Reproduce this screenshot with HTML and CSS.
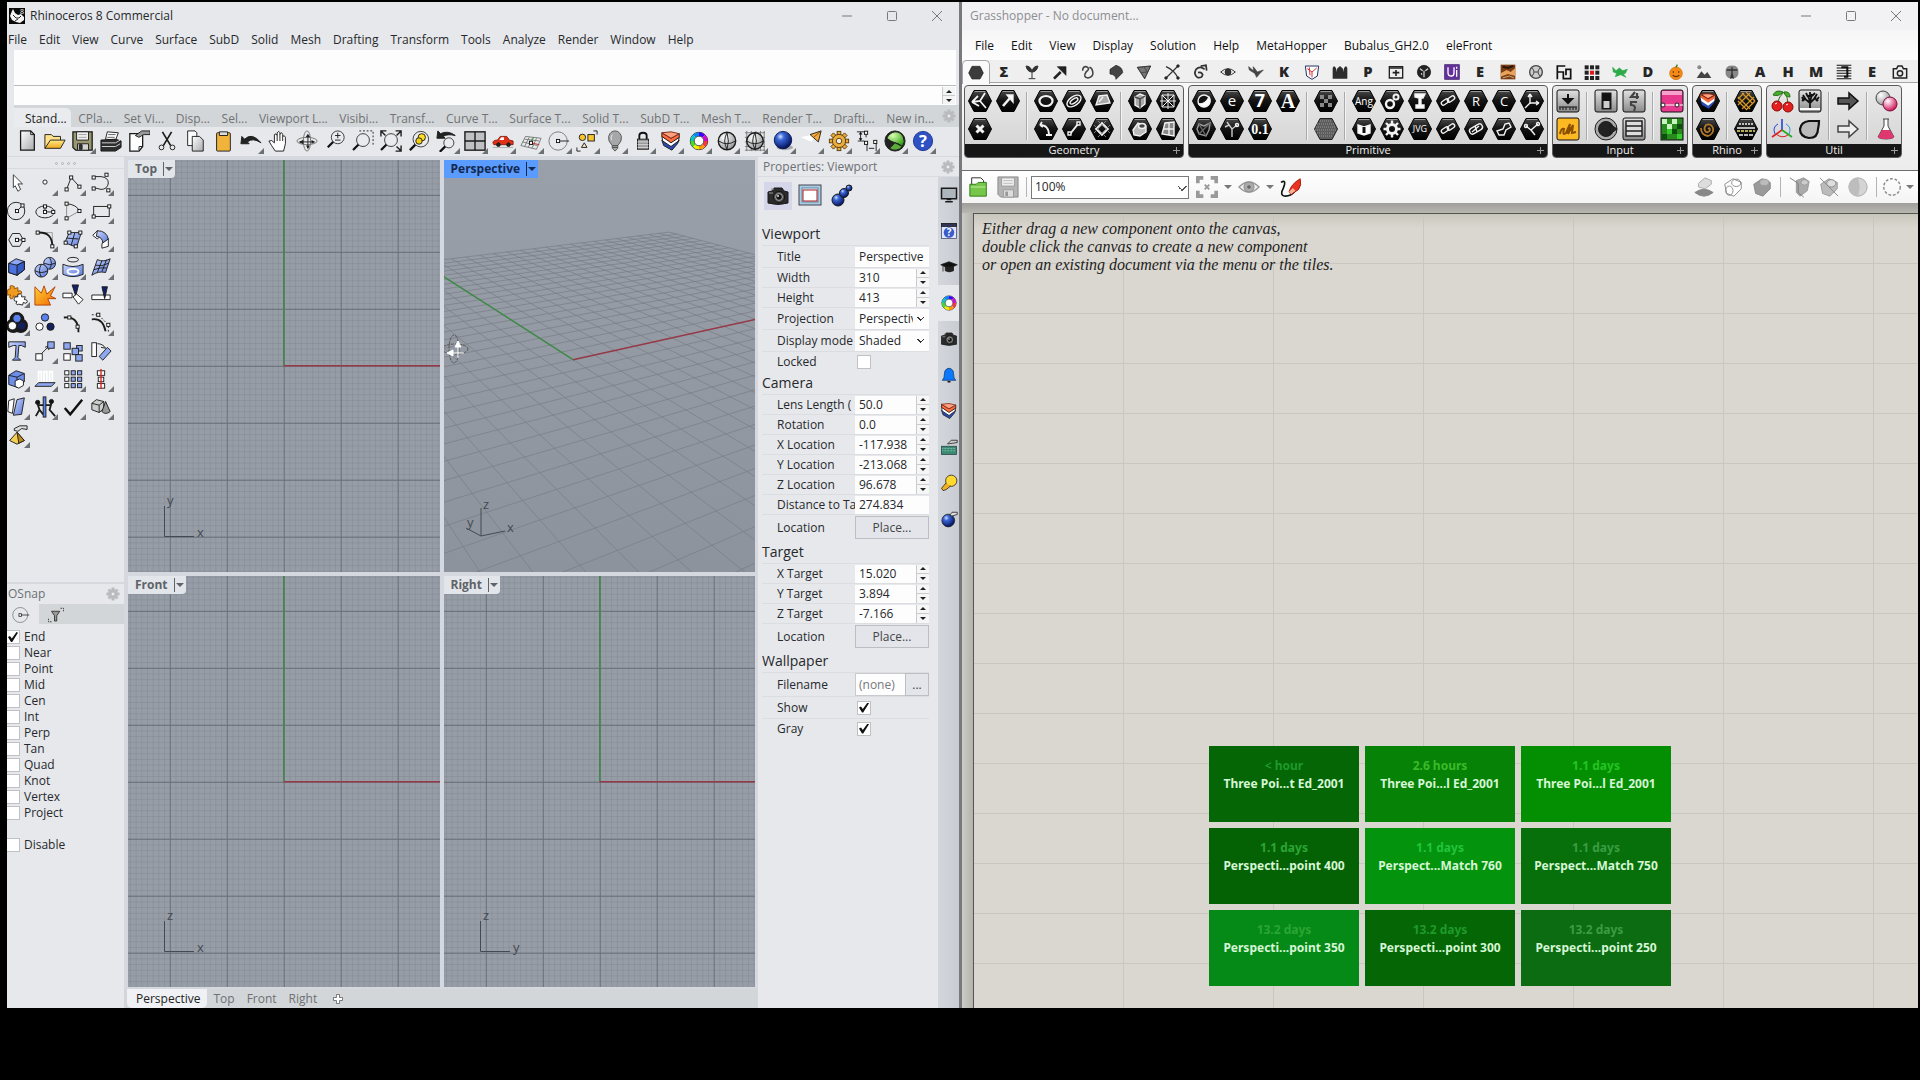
FILE: index.html
```html
<!DOCTYPE html>
<html lang="en">

<head>
    <meta charset="UTF-8">
    <meta name="viewport" content="width=device-width, initial-scale=1.0">
    <title>Rhinoceros 8 Commercial</title>
    <link rel="stylesheet" href="styles.css">
</head>

<body>
    <!-- shared gradients -->
    <svg class="defs" aria-hidden="true">
        <defs>
            <radialGradient id="gBlue" cx=".35" cy=".3" r=".7"><stop offset="0" stop-color="#cfe0ff"/><stop offset=".3" stop-color="#3a67d8"/><stop offset="1" stop-color="#06145e"/></radialGradient>
            <radialGradient id="gWhite" cx=".35" cy=".3" r=".8"><stop offset="0" stop-color="#fff"/><stop offset="1" stop-color="#8d8f94"/></radialGradient>
            <radialGradient id="gGreen" cx=".35" cy=".25" r=".8"><stop offset="0" stop-color="#d8ffb0"/><stop offset="1" stop-color="#2f9a12"/></radialGradient>
            <radialGradient id="gPink" cx=".35" cy=".3" r=".7"><stop offset="0" stop-color="#fff"/><stop offset="1" stop-color="#d2195c"/></radialGradient>
            <linearGradient id="gGray" x2="1" y2="1"><stop offset="0" stop-color="#fff"/><stop offset="1" stop-color="#a9abaf"/></linearGradient>
            <linearGradient id="gBox" x2="0" y2="1"><stop offset="0" stop-color="#e2e2e2"/><stop offset="1" stop-color="#8a8a8a"/></linearGradient>
            <linearGradient id="gHex" x2="0" y2="1"><stop offset="0" stop-color="#4a4a4a"/><stop offset=".45" stop-color="#151515"/><stop offset="1" stop-color="#000"/></linearGradient>
            <linearGradient id="gGold" x2="0" y2="1"><stop offset="0" stop-color="#ffe88a"/><stop offset="1" stop-color="#f0a81c"/></linearGradient>
            <linearGradient id="gFlat" x2="1" y2="1"><stop offset="0" stop-color="#c9d6ff"/><stop offset="1" stop-color="#5878d8"/></linearGradient>
            <linearGradient id="gFire" x2="1" y2="1"><stop offset="0" stop-color="#ffcf3a"/><stop offset="1" stop-color="#f06a00"/></linearGradient>
            <pattern id="minor" width="5.67" height="5.67" patternUnits="userSpaceOnUse"><path d="M0 0H5.67M0 0V5.67" class="minor"/></pattern>
            <pattern id="major" width="56.7" height="56.7" patternUnits="userSpaceOnUse"><path d="M0 0H56.7M0 0V56.7" class="major"/></pattern>
        </defs>
    </svg>

    <div class="desktop">
        <section class="win rhino">
            <header class="title-bar">
                <svg class="logo" viewBox="0 0 16 16"><path d="M0 0H16V16H0z" fill="#0a0a0a"/><path d="M1 8L3 3 4 1 6 5 9 7 12 6 15 9 15 12 11 15 7 14 3 12z" fill="#f4f4f4"/><path d="M4 7L7 10 10 10 12 8M6 13L9 11" stroke="#222" fill="none"/><text x="11" y="6" font-size="7" fill="#fff">8</text></svg>
                <h1>Rhinoceros 8 Commercial</h1>
                <div class="win-btns"></div>
            </header>
            <nav class="menu" data-items="File,Edit,View,Curve,Surface,SubD,Solid,Mesh,Drafting,Transform,Tools,Analyze,Render,Window,Help"></nav>
            <div class="command">
                <div class="history"></div>
                <div class="prompt">
                    <input type="text" aria-label="Command">
                    <span class="spin"><button aria-label="Up"></button><button aria-label="Down"></button></span>
                </div>
            </div>
            <div class="tabs" data-items="Stand...,CPla...,Set Vi...,Disp...,Sel...,Viewport L...,Visibi...,Transf...,Curve T...,Surface T...,Solid T...,SubD T...,Mesh T...,Render T...,Drafti...,New in..."></div>
            <div class="toolbar" id="standard"></div>

            <div class="work">
                <aside class="side">
                    <div class="toolbox">
                        <div class="grip"><i></i><i></i><i></i><i></i></div>
                        <div class="tool-grid" id="tools"></div>
                    </div>
                    <div class="osnap">
                        <h2>OSnap <span class="gear"></span></h2>
                        <div class="osnap-tabs">
                            <button class="active" data-icon="snap" aria-label="Snaps"></button>
                            <button data-icon="filter" aria-label="Filter"></button>
                        </div>
                        <div class="snaps" id="snaps"></div>
                    </div>
                </aside>

                <main class="views">
                    <div class="view-grid">
                        <div class="view" data-name="Top" data-v="y" data-h="x"></div>
                        <div class="view persp" data-name="Perspective"></div>
                        <div class="view" data-name="Front" data-v="z" data-h="x"></div>
                        <div class="view" data-name="Right" data-v="z" data-h="y"></div>
                    </div>
                    <div class="view-tabs">
                        <button class="active">Perspective</button>
                        <button>Top</button>
                        <button>Front</button>
                        <button>Right</button>
                        <button class="add" data-icon="plus" aria-label="New viewport"></button>
                    </div>
                </main>

                <aside class="props">
                    <h2>Properties: Viewport <span class="gear"></span></h2>
                    <div class="props-body">
                        <form class="form">
                            <div class="pages">
                                <button type="button" class="active" data-icon="camera" aria-label="Viewport"></button>
                                <button type="button" data-icon="frame" aria-label="Frame"></button>
                                <button type="button" data-icon="balls" aria-label="Material"></button>
                            </div>
                            <div id="rows"></div>
                        </form>
                        <div class="strip" id="strip"></div>
                    </div>
                </aside>
            </div>
        </section>

        <section class="win gh">
            <header class="title-bar">
                <h1>Grasshopper - No document...</h1>
                <div class="win-btns"></div>
            </header>
            <nav class="menu" data-items="File,Edit,View,Display,Solution,Help,MetaHopper,Bubalus_GH2.0,eleFront"></nav>
            <div class="gh-tabs" id="ghTabs"></div>
            <div class="ribbon" id="ribbon"></div>
            <div class="gh-bar">
                <button data-icon="ghOpen" aria-label="Open"></button>
                <button data-icon="ghSave" aria-label="Save"></button>
                <i class="sep"></i>
                <select aria-label="Zoom"><option>100%</option></select>
                <button data-icon="extents" aria-label="Zoom extents"></button>
                <i class="arrow"></i>
                <button class="eye" data-icon="eyeGray" aria-label="Preview"></button>
                <i class="arrow"></i>
                <button data-icon="sketch" aria-label="Sketch"></button>
                <span class="fill"></span>
                <button data-icon="cylOff" aria-label="No preview"></button>
                <button data-icon="cylWire" aria-label="Wireframe preview"></button>
                <button data-icon="cyl" aria-label="Shaded preview"></button>
                <i class="sep"></i>
                <button data-icon="cylCut" aria-label="Selected preview"></button>
                <button data-icon="cylSlash" aria-label="Disable preview"></button>
                <button data-icon="ballGray" aria-label="Mesh quality"></button>
                <i class="sep"></i>
                <button class="narrow" data-icon="dotted" aria-label="Preview settings"></button>
                <i class="arrow"></i>
            </div>
            <div class="canvas">
                <div class="paper">
                    <p>Either drag a new component onto the canvas,<br>double click the canvas to create a new component<br>or open an existing document via the menu or the tiles.</p>
                </div>
                <div class="tiles">
                    <button class="t1"><small>&lt; hour</small>Three Poi...t Ed_2001</button>
                    <button class="t2"><small>2.6 hours</small>Three Poi...l Ed_2001</button>
                    <button class="t3"><small>1.1 days</small>Three Poi...l Ed_2001</button>
                    <button class="t4"><small>1.1 days</small>Perspecti...point 400</button>
                    <button class="t5"><small>1.1 days</small>Perspect...Match 760</button>
                    <button class="t6"><small>1.1 days</small>Perspect...Match 750</button>
                    <button class="t7"><small>13.2 days</small>Perspecti...point 350</button>
                    <button class="t1"><small>13.2 days</small>Perspecti...point 300</button>
                    <button class="t8"><small>13.2 days</small>Perspecti...point 250</button>
                </div>
            </div>
        </section>
    </div>

    <script src="icons.js"></script>
    <script src="main.js"></script>
</body>

</html>
```
FILE: icons.js
```js
// every icon is drawn on a 24 x 24 box
// control point
const pt = (x, y) => `<rect x="${x - 1.7}" y="${y - 1.7}" width="3.4" height="3.4" fill="#fff" stroke="#111"/>`;
// grasshopper hexagon with something white on it
const hex = s => `<path d="M.5 12L6 1.5H18L23.5 12 18 22.5H6z" fill="url(#gHex)" stroke="#000"/><path d="M6.6 2.5H17.4" stroke="#999"/><g stroke="#f2f2f2" stroke-width="1.4">${s}</g>`;
const hexText = (t, size, cls = '') => hex(`<text class="${cls}" x="12" y="${12 + size * .36}" font-size="${size}" text-anchor="middle" fill="#fff" stroke="none">${t}</text>`);
const box = s => `<rect x="1" y="1" width="22" height="22" rx="2" fill="url(#gBox)" stroke="#111"/>${s}`;
const letter = t => `<text class="fat" x="12" y="20" font-size="22" text-anchor="middle" fill="#262626" stroke="none">${t}</text>`;
const lens = (x, y, r) => `<path d="M${x - r * .7} ${y + r * .7}L${x - r * .7 - 6} ${y + r * .7 + 6}" stroke="#111" stroke-width="2.4"/><circle cx="${x}" cy="${y}" r="${r}" fill="#e9ebee" stroke="#333"/>`;
const cylPath = '<path d="M3 9L12 3 21 7V14L13 22 5 19z"';
const wheel = (() => {
    const c = ['#f33', '#f90', '#ee0', '#4d2', '#0cb', '#08f', '#40f', '#d0d'];
    let s = '<circle cx="12" cy="12" r="9.5" stroke="#222" fill="#fff"/>';
    c.forEach((v, i) => {
        const a = i * Math.PI / 4, b = a + Math.PI / 4;
        s += `<path d="M${12 + 7.3 * Math.cos(a)} ${12 + 7.3 * Math.sin(a)}A7.3 7.3 0 0 1 ${12 + 7.3 * Math.cos(b)} ${12 + 7.3 * Math.sin(b)}" stroke="${v}" stroke-width="4"/>`;
    });
    return s + '<circle cx="12" cy="12" r="5.2" stroke="#444" fill="#fff"/>';
})();
const cog = (fill, stroke) => {
    let s = '';
    for (let i = 0; i < 8; i++) s += `<rect x="10" y="1.5" width="4" height="5" fill="${fill}" stroke="${stroke}" transform="rotate(${i * 45} 12 12)"/>`;
    return s + `<circle cx="12" cy="12" r="7.2" fill="${fill}" stroke="${stroke}"/><circle cx="12" cy="12" r="3" fill="#eee" stroke="${stroke}"/>`;
};
const layers = '<path d="M2 11L12 16 21 11 19 15 13 22 4 17z" fill="#2b4bb4"/><path d="M2 7L12 13 21 8 20 12 12 18 3 12z" fill="#fff"/><path d="M2 3L12 9 21 4V8L12 14 2 7z" fill="#ff6a3c"/><path d="M2 3L12 2 21 4 12 9z" fill="#ffa080" stroke="#7a2410"/>';
const cameraIcon = '<path d="M2 8L6 7 8 4H16L18 7 22 8V19Q12 22 2 19z" fill="#2b2b2b"/><path d="M3 9H7M5 5H8" stroke="#999"/><circle cx="13" cy="13" r="5.5" fill="#555" stroke="#111"/><circle cx="13" cy="13" r="3.4" fill="#151515" stroke="#aaa"/><circle cx="12" cy="12" r="1" fill="#ddd" stroke="none"/>';
const hand = '<path d="M9 5L15 2H23V6L17 5 13 8 9 7z" fill="#ddd"/>';

const icons = {
    // standard toolbar
    newFile: '<path d="M5 1H16L20 5V22H5z" fill="url(#gGray)" stroke-width="1.4"/><path d="M16 1V5H20"/>',
    open: '<path d="M1 20V5H8L10 7H18V12" fill="#ffe28a"/><path d="M1 20L7 11H23L18 20z" fill="url(#gGold)"/>',
    save: '<path d="M1 2H22V22H4L1 19z" fill="#9b9871" stroke-width="1.4"/><path d="M5 2H18V11H5z" fill="#f2f2f2"/><path d="M7 5H16M7 8H16" stroke="#999"/><path d="M6 15H18V22H6z" fill="#d5d5d5"/><path d="M8 16H11V21H8z" fill="#333"/>',
    print: '<path d="M8 2L20 3 17 11 6 10z" fill="#fff"/><path d="M9 5H17M8 8H16" stroke="#555"/><path d="M1 11L17 10 23 12V19L17 23H1z" fill="#2e2e2e"/><path d="M2 14L17 14 22 11M2 18H17L22 15" stroke="#ddd"/>',
    docProps: '<path d="M2 4H16V18L12 23H2z" fill="#fff" stroke-width="1.4"/><path d="M16 18H12V22"/><path d="M8 6L15 1H24V5L17 5 12 8z" fill="#999"/>',
    cut: '<path d="M7 2L16 17M17 2L8 17" stroke-width="1.8"/><circle cx="6" cy="19" r="2.6"/><circle cx="18" cy="19" r="2.6"/>',
    copy: '<path d="M4 1H12L14 3V17H4z" fill="#fff"/><path d="M9 7H17L21 11V23H9z" fill="url(#gGray)"/>',
    paste: '<rect x="5" y="3" width="15" height="20" rx="1" fill="#f0b43c"/><path d="M8 6V2H17V6z" fill="#ddd"/>',
    undo: '<path d="M1 15L2 7 5 10Q13 2 23 14 14 8 8 13L10 15z" fill="#222"/>',
    pan: '<path d="M8 23Q3 16 1 12 4 10 7 14V5Q9 3 10 6V3Q12 0 13 3V5Q15 1 16 5V7Q18 5 19 8V15L17 23z" fill="#fff"/><path d="M10 6V12M13 5V12M16 7V12"/>',
    orbit: '<ellipse cx="12" cy="12" rx="11" ry="4" stroke="#777"/><ellipse cx="12" cy="12" rx="4" ry="11" stroke="#777"/><path d="M4 13H19M13 6V19" stroke="#222"/><path d="M3 13L8 10.5V15.500zM13 4L10.5 8H15.5zM21 13L17 11V15zM13 21L11 17H15z" fill="#222" stroke="none"/>',
    zoom: lens(15, 8, 7) + '<path d="M12 6H18M15 3V9M12 11H18"/>',
    zoomWin: '<path d="M8 1H23V16" stroke-dasharray="2 2"/>' + lens(12, 11, 7),
    zoomExt: '<path d="M1 7V1H7M17 1H23V7M23 17V23H17M1 1L6 6M23 1L18 6M23 23L18 18" stroke-width="1.5"/>' + lens(12, 11, 7),
    zoomSel: lens(14, 10, 8.5) + '<circle cx="15" cy="8" r="4" fill="#ffdf20"/><circle cx="12" cy="12" r="3.5" fill="#f3cf10"/>',
    undoView: '<path d="M1 9L2 1 5 4Q13 0 21 6 12 4 8 7L10 9z" fill="#222"/>' + lens(14, 14, 5.5),
    fourView: '<rect x="1" y="2" width="22" height="20" fill="#bfc1c4" stroke-width="1.5"/><path d="M12 2V22M1 12H23" stroke-width="1.5"/>',
    car: '<path d="M1 14Q1 11 6 11L9 7H16L19 11 23 12V16H2z" fill="#e03018" stroke="#8e1c10"/><path d="M10 8H13V11H8z" fill="#fff" stroke="none"/><circle cx="7" cy="16" r="2" fill="#222"/><circle cx="18" cy="16" r="2" fill="#222"/><path d="M1 19H23" stroke="#aaa"/>',
    cplane: '<path d="M6 7L23 9 18 21 1 17zM5 10L21 12M3 13L19 17M10 8L5 18M14 8L9 19M18 9L13 20" stroke="#777"/><path d="M12 14L21 16" stroke="#c22"/><path d="M12 14L15 8" stroke="#3a3"/>' + pt(12, 14),
    snap: '<circle cx="11" cy="12" r="10" stroke="#777"/><path d="M11 12H23"/>' + pt(11, 12),
    selShapes: '<circle cx="7" cy="8" r="3.5" fill="#f9c52a"/><rect x="13" y="5" width="7" height="7" fill="#f9c52a"/><path d="M9 14L12 19H6z" fill="#fde9c0"/><path d="M19 1H23V5M1 19V23H5"/>',
    bulb: '<path d="M9 17Q4 12 5 7 7 1 12 1 17 1 19 7 20 12 15 17V20L12 23 9 20z" fill="#a5a7a9" stroke="#555"/><path d="M9 17H15M9 19H15" stroke="#444"/><path d="M9 5Q7 8 8 11" stroke="#eee"/>',
    lock: '<path d="M8 11V6Q8 3 12 3 16 3 16 6V11" stroke="#111" stroke-width="2"/><rect x="6" y="10" width="12" height="11" fill="#999"/><path d="M6 13H18M6 16H18M6 19H18" stroke="#ddd"/>',
    layers,
    wheel,
    wire: '<circle cx="12" cy="12" r="9.5" fill="url(#gWhite)" stroke-width="1.5"/><path d="M3 12Q12 18 21 12M12 3Q7 12 12 21M12 3Q15 12 12 21"/>',
    wireGrid: '<path d="M1 3H23M1 8H23M1 13H23M1 18H23M1 22H23M3 1V23M8 1V23M13 1V23M18 1V23M22 1V23" stroke="#777"/><circle cx="12" cy="12" r="9" fill="url(#gWhite)" stroke-width="1.5"/><path d="M3 12Q12 18 21 12M12 3Q7 12 12 21M12 3Q15 12 12 21"/>',
    ball: '<ellipse cx="14" cy="19" rx="9" ry="3" fill="#aaa" stroke="none"/><circle cx="12" cy="11" r="9.5" fill="url(#gBlue)" stroke="#08144e"/>',
    spot: '<path d="M17 4L1 8 13 13z" fill="#fff" stroke="none"/><path d="M11 5L23 1 20 13z" fill="#f6aa3a"/><path d="M23 1L15 8" stroke="#7a4a10"/>',
    cog: cog('#e9ad3c', '#5b3a08'),
    dims: '<path d="M1 2H9M5 3V11M2 12H9M14 20H20M12 13V23M22 13V23M11 3V8"/>' + pt(11, 3) + pt(11, 14) + pt(21, 13) + '<path d="M5 2L3 5H7zM5 12L3 9H7z" fill="#111" stroke="none"/>',
    green: '<circle cx="12" cy="12" r="11" fill="#222"/><path d="M12 2A10 10 0 0 1 20 18Q15 14 12 14 8 13 3 9 6 3 12 2z" fill="url(#gGreen)"/><path d="M12 14L20 18A10 10 0 0 1 6 20z" fill="#5cab3a"/>',
    help: '<circle cx="12" cy="12" r="10.5" fill="#2e52c4" stroke="#1d3790"/><text x="12" y="18.5" class="bold" font-size="18" text-anchor="middle" fill="#fff" stroke="none">?</text>',

    // side tools
    arrow: '<path d="M8 3L18 13H13L16 19 13 21 10 15 8 17z" fill="#fff" stroke="#333"/>',
    point: '<circle cx="12" cy="11" r="2.3" fill="#fff"/>',
    polyline: '<path d="M5 19L10 6 19 16"/>' + pt(5, 19) + pt(10, 6) + pt(19, 16),
    curve: '<path d="M4 5H12Q20 6 20 12 19 19 12 19L4 17"/>' + pt(4, 6) + pt(18, 3) + pt(4, 18) + pt(20, 20),
    circle: '<circle cx="11" cy="12" r="9.5"/><path d="M12 12L18 6"/>' + pt(12, 12) + pt(18, 6),
    ellipse: '<ellipse cx="12" cy="13" rx="10" ry="6.5"/><path d="M12 7V13H21"/>' + pt(12, 7) + pt(12, 13) + pt(21, 13),
    arc: '<path d="M5 4V20L19 12" stroke="#888"/><path d="M5 4Q16 5 19 12"/>' + pt(5, 4) + pt(19, 12) + pt(5, 20),
    rect: '<rect x="4" y="7" width="17" height="11"/>' + pt(4, 18) + pt(21, 7),
    polygon: '<path d="M3 13L7 6H15L19 13 15 20H7z"/><path d="M12 13H19"/>' + pt(12, 13) + pt(19, 13),
    fillet: '<path d="M4 5H20V20" stroke="#999"/><path d="M4 5Q20 4 20 20" stroke-width="2"/>' + pt(4, 5) + pt(20, 20),
    surf4: '<path d="M8 5L21 5 16 21 3 16z" fill="url(#gFlat)"/><path d="M14 5L10 19M5 11L18 12"/>' + pt(8, 5) + pt(20, 5) + pt(4, 16) + pt(15, 20),
    surf3: '<path d="M3 8L8 3 13 7 8 12z" fill="#fff"/><path d="M8 3Q18 3 20 12L14 17Q14 10 7 9z" fill="url(#gFlat)"/><path d="M20 12V20L13 22V17z" fill="#fff"/>',
    cube: '<path d="M3 8L11 3 20 6V15L12 21 3 18z" fill="#8ba7f6"/><path d="M3 8L12 10 20 6V15L12 21 3 18z" fill="#4c73dd"/><path d="M12 10V21L20 15V6z" fill="#345ac6"/>',
    spheres: '<circle cx="17" cy="8" r="6.5" fill="url(#gFlat)"/><circle cx="8" cy="16" r="7" fill="url(#gFlat)"/><path d="M1 16Q8 20 15 16M8 9Q4 16 8 23M11 8Q17 11 23 8M17 2Q21 8 17 14"/>',
    disc: '<ellipse cx="12" cy="4" rx="6" ry="2.5"/><path d="M1 9Q12 14 23 9V20Q12 25 1 20z" fill="url(#gFlat)"/><ellipse cx="12" cy="17" rx="6" ry="3" stroke="#fff" stroke-width="2"/>',
    sheet: '<path d="M8 4Q15 7 22 3L17 18Q9 16 2 21z" fill="url(#gFlat)"/><path d="M6 10Q13 12 20 8M4 15Q11 12 18 13M13 5L8 18M18 4L13 17"/>',
    puzzle: '<path d="M2 6L5 5Q3 1 7 2 10 2 9 5L13 4 13 8Q17 6 17 10 16 13 13 11L12 14 8 13Q8 17 5 16 3 14 5 12L1 12z" fill="#f09a20" stroke="#8b5000"/><path d="M10 14L13 14Q12 10 16 11 18 12 17 14L21 14 20 17Q24 17 23 20 21 22 19 20L18 23 14 22Q12 24 11 21L12 19Q8 19 9 16z" fill="#fff"/>',
    explode: '<path d="M1 23V3L8 10 11 2 14 11 23 3 18 13 24 16 15 16 18 23z" fill="url(#gFire)" stroke="#b04000"/>',
    trim: '<path d="M11 1H18L15 13z" fill="#12226a"/><path d="M1 10H11V15H1zM12 14L16 11 23 17 18 22z" fill="#fff"/>',
    split: '<path d="M2 12H22V17H2z" fill="#fff"/><path d="M13 3H19L16 16z" fill="#12226a"/>',
    group: '<circle cx="12" cy="8" r="5" stroke-width="6"/><circle cx="8" cy="15" r="5" stroke-width="6"/><circle cx="16" cy="15" r="5" stroke-width="6"/><circle cx="12" cy="7" r="4.500" fill="#5a82ee"/><circle cx="7" cy="15" r="4.500" fill="#fff"/><circle cx="17" cy="15" r="4.500" fill="#14205c"/>',
    ungroup: '<circle cx="12" cy="6" r="4" fill="#5a82ee"/><circle cx="6" cy="16" r="4" fill="#fff"/><circle cx="18" cy="16" r="4" fill="#14205c"/>',
    ctrlPts: '<path d="M2 6Q18 4 18 22" stroke-width="2"/>' + pt(8, 6) + pt(17, 16),
    rebuild: '<path d="M2 3H9L20 14V22" stroke-dasharray="2 2"/><path d="M2 8Q14 6 17 21" stroke-width="2"/>' + pt(9, 3) + pt(20, 14),
    text: '<path d="M3 2H21V8L17 6H14L13 19 16 22H7L10 19 11 6H8L3 8z" fill="url(#gFlat)"/>',
    move: '<path d="M8 15L17 6M17 6L12 8M17 6L16 11"/><rect x="2" y="15" width="7" height="7" fill="#fff"/><rect x="15" y="2" width="7" height="7" fill="#8ea8f0"/>',
    copyObj: '<rect x="2" y="3" width="7" height="7" fill="#8ea8f0"/><rect x="2" y="15" width="7" height="7" fill="#fff"/><rect x="16" y="6" width="6" height="6" fill="#8ea8f0"/><rect x="11" y="9" width="7" height="7" fill="#8ea8f0"/><rect x="15" y="16" width="7" height="7" fill="#8ea8f0"/>',
    rotate: '<rect x="2" y="3" width="5" height="15" fill="#fff"/><path d="M10 18L19 8 23 12 14 22z" fill="#8ea8f0"/><path d="M8 4Q14 4 17 9M17 9L12 8"/>',
    boolean: '<path d="M3 8L11 3 20 6V15L12 21 3 18z" fill="#6d8eea"/><path d="M3 8L12 10 20 6M12 10V21"/><path d="M10 14L15 12 19 14V19L14 22 10 20z" fill="#fff"/>',
    extrude: '<path d="M5 16H23L19 20H1z" fill="#8ea8f0"/><path d="M5 15V4H8V15M11 15V4H14V15M17 15V4H20V15" stroke="#fff" stroke-width="2"/>',
    array: [3, 10, 17].map(x => [3, 10, 17].map(y => `<rect x="${x}" y="${y}" width="4.5" height="4.5" fill="${x > 9 ? '#8ea8f0' : '#fff'}"/>`).join('')).join(''),
    align: '<rect x="8" y="3" width="8" height="5" fill="#fff"/><rect x="9" y="10" width="6" height="5" fill="#fff"/><rect x="8" y="17" width="8" height="5" fill="#fff"/><path d="M12 1V23" stroke="#d22" stroke-width="1.5"/>',
    flow: '<path d="M3 5L9 3 7 19 2 17z" fill="#fff"/><path d="M12 4L20 2 17 20 8 21z" fill="url(#gFlat)"/>',
    people: '<circle cx="4" cy="7" r="2.3" fill="#111"/><circle cx="19" cy="6" r="2.3" fill="#111"/><path d="M4 9L6 15 2 22M5 10H19M19 8L17 15 23 22M6 15L10 20" stroke-width="2"/><rect x="10" y="1" width="3" height="22" fill="#5a82ee"/>',
    check: '<path d="M3 13L9 20 22 4" stroke="#111" stroke-width="2.6"/>',
    solids: '<path d="M2 8L7 4 15 6V14L10 18 2 15z" fill="#ccc"/><path d="M2 8L10 10 15 6M10 10V18"/><path d="M17 6L22 17Q17 21 13 17z" fill="#999"/>',
    pyramid: hand + '<path d="M12 9L20 18 12 22 4 18z" fill="#f4cf55"/><path d="M12 9L14 21 20 18z" fill="#c08a18"/>',
    filter: '<path d="M6 7H17L13 13V20H10V13z" fill="#999"/><path d="M18 3H22V7M2 17V21H6" stroke-dasharray="2 1"/>',
    plus: '<path d="M10 6H14V10H18V14H14V18H10V14H6V10H10z" fill="#fff" stroke="#555"/>',

    // properties and panel strip
    camera: cameraIcon,
    frame: '<rect x="1" y="1" width="22" height="20" fill="#a9cce0" stroke="#445"/><rect x="4" y="4" width="16" height="14" fill="#e7f0f6" stroke="#68a"/><rect x="5" y="6" width="14" height="11" fill="#fff" stroke="#a22"/>',
    balls: '<circle cx="8" cy="16" r="6" fill="url(#gBlue)"/><circle cx="14" cy="9" r="4.5" fill="url(#gBlue)"/><circle cx="19" cy="4" r="3" fill="url(#gBlue)"/>',
    monitor: '<rect x="2" y="3" width="20" height="14" fill="#aeb6bd" stroke-width="2"/><path d="M9 18H15M7 21H17" stroke-width="2"/>',
    helpBox: '<rect x="2" y="2" width="20" height="20" fill="#dfe6ff" stroke="#446"/><rect x="2" y="2" width="20" height="4" fill="#335"/><circle cx="12" cy="14" r="7" fill="#3a5cc8" stroke="none"/><text x="12" y="19" class="bold" font-size="13" text-anchor="middle" fill="#fff" stroke="none">?</text>',
    cap: '<path d="M1 9L12 5 23 9 12 14z" fill="#111"/><path d="M7 12V17Q12 20 18 17V11z" fill="#222"/><path d="M4 10V18"/>',
    bell: '<path d="M3 19Q6 17 6 10 6 4 12 3 18 4 18 10 18 17 21 19z" fill="#0a78ff" stroke="#05336e"/><path d="M10 21H14" stroke-width="2"/>',
    keyboard: '<path d="M10 8L15 3H23V6L17 7z" fill="#ccc"/><rect x="2" y="11" width="20" height="11" fill="#3d8a72" stroke="#244"/><path d="M3 14H21M3 17H21" stroke="#9dc" stroke-dasharray="1 1"/>',
    lamp: '<circle cx="15" cy="9" r="7.5" fill="#ffd830"/><path d="M8 12L2 19 4 22 8 21 14 16" fill="#f0b020"/>',
    bomb: '<circle cx="11" cy="14" r="8.5" fill="url(#gBlue)"/><path d="M13 7L16 3H23V6L16 8z" fill="#ddd"/>',

    // grasshopper tabs
    hexTab: '<path d="M1 12L6 2H18L23 12 18 21H6z" fill="#3c3c3c" stroke="#222"/>',
    sigma: letter('Σ'),
    sprout: '<path d="M12 21V12Q5 12 3 3 10 3 12 11 14 3 21 3 19 12 12 12M7 22H17" fill="#333" stroke="#333" stroke-width="1.5"/>',
    dart: '<path d="M3 22L13 12" stroke="#222" stroke-width="4"/><path d="M8 4H21V17z" fill="#222"/>',
    hook: '<path d="M4 10Q4 3 10 4 16 7 9 12 4 20 12 21 21 19 19 11 18 6 14 5" stroke="#444" stroke-width="2.4"/>',
    patch: '<path d="M3 8L12 2Q22 5 22 13L12 23Q12 16 3 15z" fill="#444"/>',
    mesh: '<path d="M2 5L22 3 13 22z" fill="#777"/><path d="M2 5L22 3 13 22zM12 4L17 12 8 13" stroke="#333"/>',
    cross: '<path d="M3 21L21 3M3 4Q15 9 21 21" stroke="#333" stroke-width="1.8"/><circle cx="3" cy="21" r="2" fill="#333"/><circle cx="21" cy="3" r="2" fill="#333"/><circle cx="21" cy="21" r="2" fill="#333"/>',
    spiral: '<path d="M19 8Q12 2 6 8 2 15 8 20 15 22 16 16 14 11 9 13M13 3L21 2 22 10" stroke="#333" stroke-width="2.6"/>',
    eye: '<path d="M1 12Q12 2 23 12 12 22 1 12z" fill="#eee" stroke="#333" stroke-width="1.5"/><circle cx="12" cy="12" r="4.5" fill="#333"/>',
    bird: '<path d="M1 4L8 10 8 4 14 12 23 9 17 15 13 20 10 14 2 9z" fill="#444" stroke="#444"/>',
    K: letter('K'), P: letter('P'), E: letter('E'), D: letter('D'), A: letter('A'), H: letter('H'), M: letter('M'),
    shield: '<path d="M2 3H22L20 18 12 23 4 18z" fill="#fff" stroke="#236" stroke-width="1.5"/><path d="M5 7L12 12 19 6M12 12V20M8 5L9 17" stroke="#c33" stroke-width="1.5"/>',
    mosque: '<path d="M1 22V6L3 3 6 6V12Q7 6 12 3 17 6 18 12V6L21 3 23 6V22z" fill="#2e2e2e" stroke="none"/>',
    plusBox: '<path d="M2 4H22V21H2z" stroke="#222" stroke-width="2"/><path d="M2 6H22M7 13H17M12 9V18" stroke="#222" stroke-width="2.4"/>',
    lady: '<circle cx="12" cy="12" r="10" fill="#222"/><path d="M6 7L10 10M18 7L14 10M12 10V20M8 14L9 16" stroke="#ddd" stroke-width="1.8"/>',
    ui: '<rect x="1" y="1" width="22" height="22" fill="#63309a" stroke="#3b1a66"/><path d="M6 5V13Q6 18 11 18 15 18 15 13V5M19 9V19M19 4V7" stroke="#fff" stroke-width="2"/>',
    photo: '<rect x="1" y="1" width="22" height="22" fill="#7a3c12" stroke="none"/><path d="M1 14L10 9 16 12 23 6V18L12 15 1 19z" fill="#e7a45a" stroke="none"/><path d="M4 4L12 6 20 3" stroke="#2b1408" stroke-width="3"/><path d="M4 21L14 18 21 21" stroke="#fbe1b0"/>',
    reel: '<circle cx="12" cy="12" r="9.500" fill="#ccc" stroke="#444" stroke-width="2"/><path d="M6 6Q12 12 6 18M18 6Q12 12 18 18M9 12H15" stroke="#444" stroke-width="1.5"/>',
    fu: '<path d="M2 23V3H14M2 12H11V22H22V8H15V17" stroke="#111" stroke-width="2.6"/>',
    dots: [1, 9, 17].map(x => [2, 10, 18].map(y => `<rect x="${x}" y="${y}" width="6" height="6" fill="${x === 9 && y === 10 ? '#e01818' : '#222'}" stroke="none"/>`).join('')).join(''),
    gecko: '<path d="M1 5L6 10 11 6 16 10 23 8 20 14 17 15 21 20 13 16 5 19 7 14 2 12z" fill="#2cab48" stroke="#2cab48"/>',
    pumpkin: '<circle cx="12" cy="14" r="9.500" fill="#f58a18" stroke="#d06a00"/><path d="M12 5L14 1" stroke="#3a7a1a" stroke-width="2"/><path d="M8 11V13M16 11V13M7 17Q12 21 17 17" stroke="#5b2a00" stroke-width="1.8"/>',
    hills: '<path d="M1 21L8 11 13 16 17 12 23 21z" fill="#444" stroke="none"/><circle cx="5" cy="5" r="3" fill="#888" stroke="none"/>',
    vitruv: '<rect x="3" y="3" width="18" height="18" rx="7" fill="#888" stroke="#777"/><path d="M12 5V21M4 9H20M10 22L12 14 14 22" stroke="#333" stroke-width="2"/>',
    bars: '<path d="M1 2H23M1 6H23M1 10H23M1 14H23M1 18H23M1 22H23" stroke="#111" stroke-width="1.6"/><path d="M8 5H17V19H12" stroke="#111" stroke-width="3"/>',
    cam: '<path d="M2 7H7L9 3H15L17 7H22V21H2z" stroke="#222" stroke-width="2.2"/><circle cx="12" cy="14" r="4" stroke="#222" stroke-width="2.2"/>',

    // ribbon: geometry
    hPoint: hex('<path d="M4 13L12 12 17 4M12 12L18 19M4 13L10 7M4 13L11 17" stroke-width="1.8"/>'),
    hVec: hex('<path d="M7 17L14 9" stroke-width="2.6"/><path d="M11 6H17V13z" fill="#fff"/>'),
    hX: hex('<path d="M8.5 8.5L15.5 15.5M15.5 8.5L8.5 15.5" stroke-width="3"/>'),
    hRing: hex('<ellipse cx="12" cy="12" rx="6.5" ry="5" stroke-width="2.2"/>'),
    hSpiral: hex('<ellipse cx="12" cy="12" rx="8" ry="4.5" transform="rotate(-35 12 12)"/><ellipse cx="12" cy="12" rx="4.5" ry="2" transform="rotate(-35 12 12)"/>'),
    hPlane: hex('<path d="M6 16L9 7 17 6 20 14z" fill="#aaa"/><path d="M9 13L13 8"/>'),
    hBox: hex('<path d="M7 8L12 5 17 7V15L12 19 7 16z" fill="#aaa"/><path d="M7 8L12 10 17 7M12 10V19" stroke="#444"/>'),
    hGrid: hex('<path d="M6 6H18V18H6zM12 4V20M4 12H20M6 6L18 18M18 6L6 18" stroke-width="1"/>'),
    hArc: hex('<path d="M6 8Q15 8 15 18M6 8L8 5M6 8L9 10M12 18H18" stroke-width="1.8"/>'),
    hLine: hex('<path d="M8 17L16 7" stroke-width="2"/><path d="M6 15H9V18H6zM15 5H18V8H15z" fill="#111"/>'),
    hRect: hex('<path d="M6 12L12 6 18 12 12 18z" stroke-width="1.8"/><path d="M8 4L20 16M4 8L16 20M16 4L4 16M20 8L8 20" stroke="#999" stroke-width=".8"/>'),
    hPipe: hex('<path d="M5 13L10 6 18 9V15L12 19 6 18z" fill="#bbb"/><ellipse cx="14" cy="9" rx="3.5" ry="2.5" fill="#444"/>'),
    hMesh: hex('<path d="M6 17L9 6 18 5V19z" fill="#888"/><path d="M13 5V18M7 12H18" stroke="#eee"/>'),
    // primitive
    hBool: hex('<circle cx="12" cy="12" r="6" fill="#111"/><path d="M17 8A6 6 0 1 1 7 15Q14 15 17 8z" fill="#fff"/>'),
    hE: hexText('e', 15), h7: hexText('7', 18, 'bold'), hA: hexText('A', 20, 'serif'), h01: hexText('0.1', 14, 'serif'),
    hAng: hexText('Ang', 10), hJvg: hexText('JVG', 9), hR: hexText('R', 13), hC: hexText('C', 13),
    hCheck: hex('<path d="M6 6H10V10H6zM14 6H18V10H14zM10 10H14V14H10zM6 14H10V18H6zM14 14H18V18H14z" fill="#888" stroke="none"/>'),
    hDots: '<path d="M.5 12L6 1.5H18L23.5 12 18 22.5H6z" fill="#5c5c5c" stroke="#222"/><path d="M3 7H21M2 10H22M1 13H23M3 16H21M5 19H19M6 4H18" stroke="#999" stroke-dasharray="1 1"/>',
    hGears: hex('<circle cx="10" cy="15" r="4" stroke-width="2.4"/><circle cx="16" cy="8" r="2.5" stroke-width="2"/>'),
    hPiston: hex('<path d="M7 5H17L15 9H13V16H16V19H8V16H11V9L7 8z" fill="#fff"/>'),
    hLink: hex('<rect x="5" y="11" width="8" height="4" rx="2" transform="rotate(-35 9 13)"/><rect x="11" y="8" width="8" height="4" rx="2" transform="rotate(-35 15 10)"/>'),
    hAxes: hex('<path d="M10 14V5M10 14H19M10 14L5 19M10 5L8 8M10 5L12 8M19 14L16 12M19 14L16 16"/>'),
    hBlob: hex('<path d="M7 7L12 9 18 6 17 13 14 19 7 17 5 12z" stroke="#999"/><path d="M7 7L14 19M18 6L7 17" stroke="#666"/>'),
    hTree: hex('<path d="M12 20V12L7 5M12 12L17 8M9 8L5 10" stroke="#ccc"/><circle cx="17" cy="8" r="1.5"/>'),
    hCube: hex('<path d="M6 8L12 10 18 8V16L12 18 6 16z" fill="#fff"/><path d="M12 10V16" stroke="#111" stroke-width="3"/>'),
    hCog: hex('<circle cx="12" cy="12" r="4.5" stroke-width="3"/><path d="M12 3.500V7M12 17V20.500M3.500 12H7M17 12H20.500M6 6L8.500 8.500M15.500 15.500L18 18M18 6L15.500 8.500M8.500 15.500L6 18" stroke-width="2.4"/>'),
    hLinks: hex('<rect x="5" y="9" width="14" height="6" rx="3" transform="rotate(-30 12 12)"/><path d="M8 15L15 9M11 9L13 15"/>'),
    hBone: hex('<path d="M7 18L5 14 11 12 13 7 17 6 19 10 14 13 12 18z"/>'),
    hNet: hex('<path d="M6 9L11 13 18 7M11 13L15 18"/><circle cx="6" cy="9" r="1.5"/><circle cx="18" cy="7" r="1.5"/>'),
    // input
    slider: box('<path d="M12 5V13M8 10L12 14 16 10z" fill="#111" stroke="#111" stroke-width="2"/><path d="M3 18H21M4 18V21M7 18V21M10 18V21M14 18V21M17 18V21M20 18V21" stroke="#111"/>'),
    toggle: box('<rect x="8" y="4" width="9" height="16" fill="#111"/><rect x="9.5" y="12" width="6" height="7" fill="#ccc" stroke="none"/>'),
    digits: box('<path d="M13 3L9 8H17M15 4V10M15 13H9V16Q15 16 12 22" stroke="#444" stroke-width="2.2"/>'),
    pinkGraph: '<rect x="1" y="1" width="22" height="22" rx="2" fill="#e8388e" stroke="#111"/><path d="M2 4H22" stroke="#f8a0cc" stroke-width="4"/><path d="M1 16H23" stroke="#fff"/><circle cx="3" cy="16" r="2" fill="#fff"/><circle cx="17" cy="16" r="2" fill="#fff"/>',
    scribble: '<rect x="1" y="1" width="22" height="22" rx="2" fill="#fdb924" stroke="#111"/><path d="M4 17Q5 11 8 12 6 19 10 16L14 7 12 17 17 8 16 16 20 15" stroke="#8a4f00" stroke-width="2"/>',
    knob: '<circle cx="12" cy="12" r="11" fill="#aaa"/><circle cx="12" cy="12" r="7.5" fill="#222"/><path d="M16 7L23 12 16 17z" fill="#222"/>',
    list: box('<path d="M4 4H20V9H4zM4 9H20V14H4zM4 14H20V19H4z" fill="#ddd" stroke="#222" stroke-width="1.5"/>'),
    swatch: '<rect x="1" y="1" width="22" height="22" fill="#2a8a20" stroke="#111"/><path d="M2 2H7V7H2zM12 2H17V7H12zM7 7H12V12H7z" fill="#c8f4c0" stroke="none"/><path d="M12 12H17V17H12zM17 7H22V12H17zM2 17H7V22H2z" fill="#0c5010" stroke="none"/><path d="M7 12H12V17H7zM17 17H22V22H17z" fill="#36cc2a" stroke="none"/>',
    // rhino
    hLayers: hex(`<g transform="translate(3 3) scale(.76)" stroke="none">${layers}</g>`),
    hWeave: hex('<path d="M4 8L16 20M8 4L19 15M12 3L21 12M4 12L12 20M4 16L16 4M8 20L20 8M12 21L21 12M4 10L10 4" stroke="#d79a2a" stroke-width="1.2"/>'),
    hSwirl: hex('<path d="M12 12Q14 10 14 13 13 16 10 15 7 12 10 8 15 6 17 11 18 17 12 19 5 18 5 11" stroke="#b07828" stroke-width="1.8"/>'),
    hTypes: hex('<path d="M5 7H19" stroke-dasharray="2 1"/><path d="M3 11H21"/><path d="M3 14H21" stroke="#e8e06a" stroke-dasharray="3 1"/><path d="M5 18H19" stroke-dasharray="4 1"/>'),
    // util
    cherry: '<path d="M7 15Q9 7 14 3M18 15Q18 8 14 3" stroke="#3a6a1a"/><path d="M13 3Q6 0 3 6 9 8 13 3zM14 3Q20 2 20 8 15 8 14 3z" fill="#46b02c" stroke="#2a701a"/><circle cx="7" cy="17" r="5" fill="#e22020" stroke="#8a0808"/><circle cx="18" cy="18" r="5" fill="#e22020" stroke="#8a0808"/><path d="M5 15L7 14M16 16L18 15" stroke="#fff"/>',
    tree: box('<path d="M12 20V12M12 14L6 9M12 14L18 8M12 13L10 6M12 13L14 5M7 9L4 12M17 9L20 12M10 8L8 4M8 11L5 6M16 10L19 5M6 12L4 8M18 12L21 8M12 8L12 3M14 7L17 4" stroke="#111" stroke-width="1.8"/><path d="M2 20H22" stroke="#fff" stroke-width="2"/>'),
    fatArrow: '<path d="M2 9H13V4L22 12 13 20V15H2z" fill="#555" stroke="#111" stroke-width="1.5"/>',
    thinArrow: '<path d="M2 9H13V4L22 12 13 20V15H2z" fill="#eee" stroke="#444" stroke-width="1.5"/>',
    blobs: '<circle cx="9" cy="9" r="7" fill="url(#gWhite)" stroke="#444"/><circle cx="16" cy="15" r="7" fill="url(#gPink)" stroke="#7a1038"/>',
    gizmo: '<path d="M12 13V2" stroke="#2244d8" stroke-width="1.6"/><path d="M12 13L2 20" stroke="#d22" stroke-width="1.6"/><path d="M12 13L22 20" stroke="#2a2" stroke-width="1.6"/><path d="M5 17Q2 10 8 7" stroke="#2244d8"/><path d="M19 17Q22 10 16 7" stroke="#2a9ad8"/><path d="M6 17Q12 22 18 18" stroke="#d22"/>',
    guitar: '<path d="M21 4Q21 8 20 12 20 21 11 21 2 20 2 12 3 5 11 4z" fill="#bbb" stroke="#111" stroke-width="2.2"/>',
    flask: '<path d="M9 2H15M10 2V9L4 20Q5 22 12 22 19 22 20 20L14 9V2" fill="#fff" stroke="#444"/><path d="M8 13H16L20 20Q19 22 12 22 5 22 4 20z" fill="#e0386e" stroke="none"/>',

    // canvas toolbar
    ghOpen: '<path d="M4 10V2H14L17 5V10" fill="#fff" stroke="#222"/><path d="M2 9H9L11 7H20V22H2z" fill="#76c64a" stroke="#2a7a14"/><path d="M3 12H19" stroke="#c8f0a8"/>',
    ghSave: '<path d="M1 1H23V23H4L1 20z" fill="#b4b4b4" stroke="#888"/><path d="M5 2H19V11H5z" fill="#eee" stroke="#999"/><path d="M7 5H17M7 8H17" stroke="#bbb"/><path d="M7 15H18V23H7z" fill="#ddd" stroke="#999"/><path d="M9 17H12V22H9z" fill="#999" stroke="none"/>',
    extents: '<path d="M2 8V2H8M16 2H22V8M22 16V22H16M8 22H2V16" stroke="#999" stroke-width="4"/><path d="M9.500 9.500L14.500 14.500M14.500 9.500L9.500 14.500" stroke="#999" stroke-width="2"/>',
    eyeGray: '<path d="M1 12Q12 1 23 12 12 23 1 12z" fill="#eee" stroke="#999" stroke-width="1.5"/><circle cx="12" cy="12" r="5.5" fill="#aaa" stroke="#888"/><circle cx="12" cy="12" r="2" fill="#666" stroke="none"/>',
    sketch: '<path d="M1 7Q6 4 5 9 4 13 2 17 1 22 6 22 12 22 16 17" stroke="#111" stroke-width="1.8"/><path d="M10 17Q12 9 22 3 24 10 20 15L12 20z" fill="#e83420" stroke="#a01208"/><path d="M10 17L14 13 17 16 12 20z" fill="#ffb090" stroke="none"/>',
    cylOff: '<path d="M6 8L13 2 20 5V9L13 14 6 12z" fill="#ddd" stroke="#aaa"/><path d="M2 18Q12 11 22 18 12 26 2 18z" fill="#888" stroke="#888"/>',
    cylWire: cylPath + ' fill="#fff" stroke="#888"/><ellipse cx="15.5" cy="7.5" rx="5" ry="4" stroke="#888"/><ellipse cx="8" cy="16" rx="4" ry="5" stroke="#888"/>',
    cyl: cylPath + ' fill="#999" stroke="#888"/><ellipse cx="14.5" cy="7" rx="5" ry="3.5" fill="#bbb" stroke="#999"/>',
    cylCut: '<path d="M8 5L16 2 22 6 20 16 12 22 8 18z" fill="#aaa" stroke="#999"/><ellipse cx="17" cy="7" rx="4" ry="3" fill="#ccc" stroke="#999"/><path d="M1 2L10 8V18L16 23" stroke="#777"/>',
    cylSlash: cylPath + ' fill="#bbb" stroke="#999"/><ellipse cx="14.5" cy="8" rx="5" ry="4" fill="#ddd" stroke="#888"/><path d="M2 2L22 22" stroke="#888"/>',
    ballGray: '<circle cx="12" cy="12" r="10" fill="#d4d4d4" stroke="#aaa"/><path d="M12 2A10 10 0 0 0 12 22L14 12z" fill="#bdbdbd" stroke="none"/>',
    dotted: '<circle cx="12" cy="12" r="9" stroke="#888" stroke-width="1.5" stroke-dasharray="3 2"/>'
};

function icon(name) {
    return `<svg class="icon" viewBox="0 0 24 24" aria-hidden="true">${icons[name]}</svg>`;
}
```
FILE: main.js
```js
{
    const $ = s => document.querySelector(s);
    const all = s => document.querySelectorAll(s);

    // icon buttons, a star marks a fly-out
    const tools = str => str.trim().split(/\s+/).map(v => {
        const fly = v.endsWith('*');
        const name = v.replace('*', '');
        if (name === '_') return '<span class="cell"></span>';
        return `<button class="cell${fly ? ' fly' : ''}" aria-label="${name}">${icon(name)}</button>`;
    }).join('');

    $('#standard').innerHTML = tools(`newFile open save* print docProps cut copy paste undo* pan orbit zoom zoomWin zoomExt
        zoomSel undoView* fourView* car* cplane* snap* selShapes* bulb* lock* layers* wheel* wire* wireGrid* ball* spot* cog* dims* green* help*`);
    $('#tools').innerHTML = tools(`arrow point* polyline* curve* circle* ellipse* arc* rect* polygon* fillet* surf4* surf3*
        cube* spheres* disc* sheet* puzzle* explode trim split group* ungroup ctrlPts rebuild* text move* copyObj rotate
        boolean* extrude* array* align* flow* people* check* solids* pyramid*`);
    $('#strip').innerHTML = tools('monitor helpBox cap wheel camera bell layers keyboard lamp bomb');
    $('#strip').children[3].classList.add('active');
    $('#ghTabs').innerHTML = tools(`hexTab sigma sprout dart hook patch mesh cross spiral eye bird K shield mosque P plusBox lady
        ui E photo reel fu dots gecko D pumpkin hills vitruv A H M bars E cam`);
    $('#ghTabs').children[0].classList.add('active');

    // ribbon panels: [icons, columns] for each group
    const panels = [
        ['Geometry', ['hPoint hVec hX _', 2], ['hRing hSpiral hPlane hArc hLine hRect', 3], ['hBox hGrid hPipe hMesh', 2]],
        ['Primitive', ['hBool hE h7 hA hBlob hTree h01 _', 4], ['hCheck hDots', 1],
            ['hAng hGears hPiston hLink hR hC hAxes hCube hCog hJvg hLink hLinks hBone hNet', 7]],
        ['Input', ['slider scribble', 1], ['toggle digits knob list', 2], ['pinkGraph swatch', 1]],
        ['Rhino', ['hLayers hSwirl', 1], ['hWeave hTypes', 1]],
        ['Util', ['cherry tree gizmo guitar', 2], ['fatArrow thinArrow', 1], ['blobs flask', 1]]
    ];
    $('#ribbon').innerHTML = panels.map(([name, ...groups]) => `
        <div class="panel">
            <div class="groups">${groups.map(([g, n]) => `<div class="group" style="--cols: ${n}">${tools(g)}</div>`).join('<i></i>')}</div>
            <h3>${name}<b></b></h3>
        </div>`).join('');

    all('[data-icon]').forEach(el => el.innerHTML = icon(el.dataset.icon));
    all('.menu').forEach(el => {
        el.innerHTML = el.dataset.items.split(',').map(v => `<a href="#">${v}</a>`).join('');
    });
    $('.tabs').innerHTML = $('.tabs').dataset.items.split(',').map((v, i) => `<button${i ? '' : ' class="active"'}>${v}</button>`).join('') + '<span class="gear"></span>';
    all('.gear').forEach(el => el.innerHTML = `<svg viewBox="0 0 24 24">${cog('#b9bbbe', '#b9bbbe')}</svg>`);
    all('.win-btns').forEach(el => {
        el.innerHTML = '<button aria-label="Minimize"><svg viewBox="0 0 12 12"><path d="M1 6H11"/></svg></button>'
            + '<button aria-label="Maximize"><svg viewBox="0 0 12 12"><rect x="1.5" y="1.5" width="9" height="9" rx="1"/></svg></button>'
            + '<button aria-label="Close"><svg viewBox="0 0 12 12"><path d="M1 1L11 11M11 1L1 11"/></svg></button>';
    });

    $('#snaps').innerHTML = 'End,Near,Point,Mid,Cen,Int,Perp,Tan,Quad,Knot,Vertex,Project,Disable'.split(',')
        .map(v => `<label${v === 'Disable' ? ' class="last"' : ''}><input type="checkbox"${v === 'End' ? ' checked' : ''}>${v}</label>`).join('');

    // properties form
    const rows = [
        ['head', 'Viewport'], ['tall', 'Title', 'Perspective'], ['num', 'Width', '310'], ['num', 'Height', '413'],
        ['select', 'Projection', 'Perspective'], ['select', 'Display mode', 'Shaded'], ['check', 'Locked', false],
        ['head', 'Camera'], ['num', 'Lens Length (', '50.0'], ['num', 'Rotation', '0.0'], ['num', 'X Location', '-117.938'],
        ['num', 'Y Location', '-213.068'], ['num', 'Z Location', '96.678'], ['text', 'Distance to Ta', '274.834'], ['place', 'Location'],
        ['head', 'Target'], ['num', 'X Target', '15.020'], ['num', 'Y Target', '3.894'], ['num', 'Z Target', '-7.166'], ['place', 'Location'],
        ['head', 'Wallpaper'], ['file', 'Filename', '(none)'], ['check show', 'Show', true], ['check', 'Gray', true]
    ];
    $('#rows').innerHTML = rows.map(([type, label, value], i) => {
        const id = 'f' + i;
        if (type === 'head') return `<h3>${label}</h3>`;
        const spin = '<span class="spin"><button type="button" aria-label="Up"></button><button type="button" aria-label="Down"></button></span>';
        const input = `<input type="text" id="${id}" value="${value}">`;
        let field = input;
        if (type === 'num') field = input + spin;
        if (type === 'select') field = `<select id="${id}"><option>${value}</option></select>`;
        if (type.startsWith('check')) field = `<input type="checkbox" id="${id}"${value ? ' checked' : ''}>`;
        if (type === 'place') field = `<button type="button" id="${id}">Place...</button>`;
        if (type === 'file') field = input + '<button type="button" class="browse">...</button>';
        return `<div class="row ${type}"><label for="${id}">${label}</label><div class="field">${field}</div></div>`;
    }).join('');

    // perspective grid, seen through the camera of the viewport
    const cam = [-117.938, -213.068, 96.678];
    const target = [15.02, 3.894, -7.166];
    const focal = 646;
    const dot = (a, b) => a[0] * b[0] + a[1] * b[1] + a[2] * b[2];
    const unit = a => a.map(v => v / Math.hypot(...a));
    const f = unit(target.map((v, i) => v - cam[i]));
    const r = unit([f[1], -f[0], 0]);
    const u = [r[1] * f[2], -r[0] * f[2], r[0] * f[1] - r[1] * f[0]];
    const toCam = (x, y) => {
        const p = [x - cam[0], y - cam[1], -cam[2]];
        return [dot(p, r), dot(p, u), dot(p, f)];
    };
    const seg = (x1, y1, x2, y2) => {
        let a = toCam(x1, y1), b = toCam(x2, y2);
        const near = 20;
        if (a[2] < near && b[2] < near) return '';
        if (a[2] > b[2]) [a, b] = [b, a];
        if (a[2] < near) {
            const t = (near - a[2]) / (b[2] - a[2]);
            a = a.map((v, i) => v + (b[i] - v) * t);
        }
        const s = p => `${(p[0] / p[2] * focal).toFixed(1)} ${(-p[1] / p[2] * focal).toFixed(1)}`;
        return `M${s(a)}L${s(b)}`;
    };
    let lines = '';
    for (let i = -200; i <= 200; i += 10) {
        lines += seg(i, -200, i, 200) + seg(-200, i, 200, i);
    }

    all('.view').forEach(el => {
        const { name, v, h } = el.dataset;
        const persp = name === 'Perspective';
        const draw = persp
            ? `<path class="floor" d="${lines}"/><path class="green" d="${seg(0, 0, 0, 200)}"/><path class="red" d="${seg(0, 0, 200, 0)}"/>`
            : '<rect x="-600" y="-600" width="1200" height="1200" fill="url(#minor)"/><rect x="-600" y="-600" width="1200" height="1200" fill="url(#major)"/><path class="green" d="M0 0V-600"/><path class="red" d="M0 0H600"/>';
        const axes = persp
            ? '<path d="M37 64V36M37 64L61 59M37 64L22 56"/><text x="39" y="37">z</text><text x="63" y="60">x</text><text x="23" y="55">y</text>'
            : `<path d="M36.5 34V64.5H66"/><text x="39" y="33">${v}</text><text x="69" y="65">${h}</text>`;
        el.innerHTML = `
            <svg class="scene" viewBox="-155 -206 310 412" preserveAspectRatio="xMidYMid slice">${draw}</svg>
            <svg class="axes" viewBox="0 0 100 100">${axes}</svg>
            <button class="tag">${name}<i></i></button>`;
        if (persp) el.innerHTML += '<svg class="cursor" viewBox="0 0 30 32"><ellipse cx="15" cy="16" rx="13" ry="5"/><ellipse cx="14" cy="16" rx="5" ry="14"/><path class="hand" d="M9 20H24M18 12V25"/><path class="hand" d="M7 20L13 17V23zM18 8L15 14H21z"/></svg>';
    });
}
```
FILE: styles.css
```css
* {
    margin: 0;
    padding: 0;
    box-sizing: border-box;
}

body {
    background: #000;
    color: #26282b;
    font: 12px/16px "Open Sans", "Noto Sans", sans-serif;
}

button,
input,
select {
    font: inherit;
    color: inherit;
    background: none;
    border: 0;
    border-radius: 0;
    outline: 0;
    appearance: none;
    min-width: 0;
}

a {
    color: inherit;
    text-decoration: none;
}

svg {
    display: block;
}

.defs {
    position: absolute;
    width: 0;
    height: 0;
}

.defs .minor {
    stroke: #7c848e;
    stroke-width: .8;
}

.defs .major {
    stroke: #676e78;
    stroke-width: 1.8;
}

.icon {
    width: 24px;
    height: 24px;
    fill: none;
    stroke: #1a1a1a;
}

.icon text {
    font-family: "Open Sans", sans-serif;
}

.icon .bold {
    font-weight: 700;
}

.icon .serif {
    font-family: "Liberation Serif", serif;
    font-weight: 700;
}

.icon .fat {
    font-weight: 800;
}

.cell {
    position: relative;
    display: flex;
    align-items: center;
    justify-content: center;
    width: 28px;
    height: 28px;
    flex: none;
}

.fly::after {
    content: "";
    position: absolute;
    right: 1px;
    bottom: 1px;
    border: 3px solid;
    border-color: transparent #6d7073 #6d7073 transparent;
}

.desktop {
    display: grid;
    grid-template-columns: 954fr 957fr;
    height: 100vh;
    min-height: 900px;
    padding: 2px 2px 72px 7px;
}

.win {
    display: flex;
    flex-direction: column;
    min-width: 0;
    overflow: hidden;
}

/* title and menu */
.title-bar {
    display: flex;
    align-items: center;
    height: 28px;
    padding-left: 2px;
    flex: none;
}

.title-bar h1 {
    flex: 1;
    font-size: 12px;
    font-weight: 400;
}

.logo {
    width: 16px;
    height: 16px;
    margin-right: 5px;
}

.win-btns {
    display: flex;
}

.win-btns button {
    width: 45px;
    height: 28px;
    display: flex;
    align-items: center;
    justify-content: center;
}

.win-btns svg {
    width: 12px;
    height: 12px;
    fill: none;
    stroke: #77797c;
}

.menu {
    display: flex;
    align-items: center;
    flex: none;
}

/* rhino window */
.rhino {
    background: #e6e8eb;
    border-right: 2px solid #77797d;
}

.rhino .menu {
    height: 20px;
    padding-left: 1px;
    padding-bottom: 1px;
    gap: 12px;
}

.command {
    margin-left: 7px;
    margin-right: 3px;
    background: #fdfdfd;
    flex: none;
}

.history {
    height: 36px;
    border-bottom: 1px solid #b9bbbd;
}

.prompt {
    display: flex;
    align-items: center;
    height: 19px;
    padding-right: 1px;
}

.prompt input {
    flex: 1;
    padding: 0 4px;
}

.spin {
    display: flex;
    flex-direction: column;
    width: 13px;
    height: 17px;
    border-left: 1px solid #c9cbce;
    background: #f4f4f5;
}

.spin button {
    flex: 1;
    display: flex;
    align-items: center;
    justify-content: center;
}

.spin button + button {
    border-top: 1px solid #c9cbce;
}

.spin button::after {
    content: "";
    border: 3px solid transparent;
    border-top-width: 0;
    border-bottom-color: #222;
}

.spin button + button::after {
    border-width: 3px 3px 0;
    border-top-color: #222;
}

.tabs {
    display: flex;
    align-items: flex-end;
    justify-content: space-between;
    height: 22px;
    margin-left: 7px;
    padding-right: 3px;
    background: #d3d6d8;
    color: #707376;
    flex: none;
}

.tabs button {
    height: 19px;
    padding: 2px 4px 0;
    white-space: nowrap;
}

.tabs .active {
    padding: 2px 4px 0 11px;
    background: #e9ebee;
    border-radius: 0 5px 0 0;
    color: #222;
}

.gear {
    display: inline-block;
    width: 14px;
    height: 14px;
    flex: none;
}

.tabs .gear {
    align-self: center;
}

.toolbar {
    display: flex;
    height: 29px;
    padding-left: 6px;
    flex: none;
}

.toolbar .icon,
.tool-grid .icon {
    width: 22px;
    height: 22px;
}

.work {
    display: flex;
    flex: 1;
    min-height: 0;
    border-top: 1px solid #d5d8dc;
}

.side {
    display: flex;
    flex-direction: column;
    width: 117px;
    flex: none;
}

.toolbox {
    min-height: 427px;
    border-bottom: 2px solid #d5d8dc;
    overflow: hidden;
}

.grip {
    display: flex;
    justify-content: center;
    gap: 3px;
    height: 12px;
    padding-top: 5px;
    border-bottom: 1px solid #d8dade;
}

.grip i {
    width: 3px;
    height: 3px;
    border: 1px solid #b0b2b6;
    border-radius: 50%;
}

.tool-grid {
    display: grid;
    grid-template-columns: repeat(4, 28px);
    margin-left: -4px;
}

.osnap h2 {
    display: flex;
    align-items: center;
    justify-content: space-between;
    height: 20px;
    padding: 0 4px 0 1px;
    font-size: 12px;
    font-weight: 400;
    color: #6d7074;
}

.osnap-tabs {
    display: flex;
    background: #d3d6d8;
}

.osnap-tabs button {
    display: flex;
    justify-content: center;
    width: 34px;
    height: 20px;
    padding-top: 2px;
}

.osnap-tabs .active {
    width: 32px;
    padding-right: 4px;
    background: #e6e8eb;
}

.osnap-tabs .icon {
    width: 18px;
    height: 18px;
}

.snaps {
    padding-top: 5px;
}

.snaps label {
    display: flex;
    align-items: center;
    height: 16px;
}

.snaps .last {
    margin-top: 16px;
}

input[type=checkbox] {
    width: 14px;
    height: 14px;
    border: 1px solid #bfc1c4;
    background: #fff;
    flex: none;
}

input[type=checkbox]:checked::after {
    content: "";
    display: block;
    width: 10px;
    height: 10px;
    margin: 1px;
    background: #111;
    clip-path: polygon(0 50%, 20% 40%, 38% 65%, 85% 0, 100% 8%, 42% 100%, 30% 100%);
}

.snaps input {
    width: 13px;
    margin-right: 4px;
    border-left: 0;
}

.views {
    display: flex;
    flex-direction: column;
    flex: 1;
    min-width: 0;
    background: #d5d9df;
}

.view-grid {
    display: grid;
    grid-template-columns: 1fr 1fr;
    grid-template-rows: 1fr 1fr;
    gap: 4px;
    flex: 1;
    min-height: 0;
    padding: 3px 3px 2px 4px;
}

.view {
    position: relative;
    overflow: hidden;
    min-height: 0;
    background: #979da6;
}

.view.persp {
    background: linear-gradient(#9aa0a9, #8d939c);
}

.scene {
    position: absolute;
    width: 100%;
    height: 100%;
}

.scene path {
    fill: none;
    stroke-width: 1.5;
}

.scene .floor {
    stroke: #777e86;
    stroke-width: .7;
}

.scene .green {
    stroke: #3e8a46;
}

.scene .red {
    stroke: #973a48;
}

.axes {
    position: absolute;
    left: 0;
    bottom: 0;
    width: 100px;
    height: 100px;
    fill: none;
    stroke: #444a52;
}

.axes text {
    fill: #444a52;
    stroke: none;
    font-size: 13px;
}

.cursor {
    position: absolute;
    left: -4px;
    top: 173px;
    width: 30px;
    height: 32px;
    fill: none;
    stroke: #555;
    stroke-dasharray: 3 1;
}

.cursor .hand {
    stroke: #fff;
    fill: #fff;
    stroke-dasharray: none;
}

.tag {
    position: relative;
    display: flex;
    align-items: center;
    height: 18px;
    padding: 0 1px 0 7px;
    background: #e2e5e9;
    border-radius: 0 0 4px 0;
    font-weight: 700;
    color: #5e6368;
}

.tag i {
    width: 11px;
    height: 14px;
    margin-left: 6px;
    border-left: 1px solid #5e6368;
    display: flex;
    align-items: center;
    justify-content: center;
}

.tag i::after,
.arrow::after {
    content: "";
    border: 4px solid transparent;
    border-bottom-width: 0;
    border-top-color: currentColor;
}

.persp .tag {
    background: #5a9bff;
    color: #14284e;
    border-radius: 0;
}

.persp .tag i {
    border-color: #14284e;
}

.view-tabs {
    display: flex;
    height: 19px;
    padding-left: 3px;
    background: #d3d6d8;
    color: #6d7074;
    flex: none;
}

.view-tabs button {
    padding: 0 6px;
}

.view-tabs .active {
    padding: 0 7px 0 9px;
    background: #eff1f4;
    border-radius: 0 0 5px 5px;
    color: #222;
}

.view-tabs .icon {
    width: 18px;
    height: 18px;
}

/* properties */
.props {
    display: flex;
    flex-direction: column;
    width: 201px;
    flex: none;
}

.props h2 {
    display: flex;
    align-items: center;
    justify-content: space-between;
    height: 20px;
    padding: 0 4px 0 5px;
    border-bottom: 1px solid #d8dbe0;
    font-size: 12px;
    font-weight: 400;
    color: #6d7074;
}

.props-body {
    display: flex;
    flex: 1;
}

.form {
    width: 180px;
    padding: 0 9px 0 4px;
}

.pages {
    display: flex;
    gap: 4px;
    padding: 5px 2px 12px;
}

.pages button {
    display: flex;
    align-items: center;
    justify-content: center;
    width: 28px;
    height: 28px;
}

.pages .active {
    background: #d6d6ea;
}

.form h3 {
    height: 23px;
    line-height: 23px;
    font-size: 14px;
    font-weight: 400;
}

.row {
    display: flex;
    height: 20px;
    padding-left: 15px;
    border-top: 1px solid #dbdde1;
}

.row label {
    align-self: center;
    width: 78px;
    overflow: hidden;
    white-space: nowrap;
    flex: none;
}

.row.tall,
.row.select,
.row.show {
    height: 22px;
}

.row.file {
    height: 24px;
}

.row.place {
    height: 26px;
}

.field {
    display: flex;
    align-items: center;
    flex: 1;
    min-width: 0;
}

.field input[type=text],
.field select {
    flex: 1;
    width: 0;
    height: 18px;
    padding: 0 4px;
    background: #fdfdfd;
}

.tall .field input[type=text],
.field select {
    height: 20px;
}

.field select {
    padding-right: 16px;
    background: linear-gradient(45deg, transparent 50%, #333 50%, #333 65%, transparent 65%) 62px 8px / 4px 4px no-repeat, linear-gradient(-45deg, transparent 50%, #333 50%, #333 65%, transparent 65%) 66px 8px / 4px 4px no-repeat, #fdfdfd;
}

.field input[type=checkbox] {
    margin-left: 2px;
}

.field .spin {
    background: #f6f6f7;
    height: 18px;
}

.place .field button,
.file .field button {
    flex: 1;
    height: 23px;
    border: 1px solid #bcbec3;
    background: #e3e5ea;
    color: #444;
}

.file .field .browse {
    flex: none;
    width: 24px;
}

.file .field input[type=text] {
    height: 23px;
    border: 1px solid #c8cacd;
    border-right: 0;
    color: #77797c;
    padding: 0 3px;
}

.strip {
    display: flex;
    flex-direction: column;
    flex: 1;
    background: linear-gradient(90deg, #d3d6db, #c9ccd2);
}

.strip .cell {
    width: 100%;
    height: 36px;
}

.strip .icon {
    width: 18px;
    height: 18px;
}

.strip .active {
    background: #e6e8eb;
}

/* grasshopper window */
.gh {
    background: #efeff0;
    border-left: 1px solid #77797d;
}

.gh .title-bar {
    height: 28px;
    padding-left: 8px;
    background: #f2f2f4;
    color: #8c8e91;
}

.gh .menu {
    height: 30px;
    padding: 2px 0 0 13px;
    gap: 17px;
    background: linear-gradient(#f6f6f7, #fdfdfd);
    color: #111;
}

.gh-tabs {
    display: flex;
    height: 23px;
    border-bottom: 1px solid #a5a5a7;
    flex: none;
}

.gh-tabs .cell {
    height: 24px;
}

.gh-tabs .icon {
    width: 16px;
    height: 16px;
}

.gh-tabs .active {
    background: #fafafa;
    border: 1px solid #a5a5a7;
    border-bottom: 0;
    border-radius: 5px 5px 0 0;
}

.ribbon {
    display: flex;
    gap: 4px;
    height: 88px;
    padding: 2px;
    border-bottom: 1px solid #6d6d6f;
    background: linear-gradient(#fafafa, #ececec);
    flex: none;
}

.panel {
    height: 73px;
    border: 1px solid #5b5b5d;
    border-radius: 4px;
    background: linear-gradient(#e9e9e9, #d2d2d2);
    overflow: hidden;
}

.groups {
    display: flex;
    padding: 1px;
}

.group {
    display: grid;
    grid-template-columns: repeat(var(--cols), 28px);
}

.groups > i {
    width: 2px;
    height: 48px;
    margin: 5px 4px 0;
    border-left: 1px solid #a9a9a9;
    border-right: 1px solid #f4f4f4;
}

.panel h3 {
    position: relative;
    height: 16px;
    background: #161616;
    color: #eee;
    font-size: 11px;
    font-weight: 400;
    line-height: 12px;
    text-align: center;
}

.panel h3 b {
    position: absolute;
    right: 3px;
    top: 3px;
    width: 7px;
    height: 7px;
    background: linear-gradient(#999, #999) center / 1px 7px no-repeat, linear-gradient(#999, #999) center / 7px 1px no-repeat;
}

.gh-bar {
    display: flex;
    align-items: center;
    height: 32px;
    padding: 0 2px;
    background: linear-gradient(#fff, #f4f4f4);
    flex: none;
}

.gh-bar button {
    display: flex;
    align-items: center;
    justify-content: center;
    width: 29px;
    height: 24px;
}

.gh-bar .narrow {
    width: 22px;
}

.gh-bar .icon {
    width: 22px;
    height: 22px;
}

.gh-bar .sep {
    width: 1px;
    height: 20px;
    margin: 0 4px;
    background: #b5b5b5;
}

.gh-bar select {
    width: 158px;
    height: 23px;
    margin-right: 3px;
    padding: 0 3px;
    border: 1px solid #7a7a7a;
    background: linear-gradient(45deg, transparent 50%, #555 50%, #555 65%, transparent 65%) 145px 9px / 5px 5px no-repeat, linear-gradient(-45deg, transparent 50%, #555 50%, #555 65%, transparent 65%) 150px 9px / 5px 5px no-repeat, #fff;
}

.gh-bar .arrow {
    width: 13px;
    color: #777;
    display: flex;
    justify-content: center;
}

.fill {
    flex: 1;
}

.canvas {
    position: relative;
    display: flex;
    flex: 1;
    min-height: 0;
    padding: 10px 0 0 11px;
    background: linear-gradient(#9f9e9a, #b9b7b1 10px, transparent 10px), linear-gradient(90deg, #cdcbc5, #b4b2ac 11px);
}

.paper {
    flex: 1;
    padding: 6px 8px;
    border-top: 1px solid #55554f;
    border-left: 1px solid #55554f;
    background: linear-gradient(90deg, #cac7c0 1px, transparent 1px) -1px 0 / 150px 100%, linear-gradient(#cac7c0 1px, transparent 1px) 0 -1px / 100% 50px, linear-gradient(#c9c6bd, transparent 14px), #dad7d0;
}

.paper p {
    font: italic 16px/18px "Liberation Serif", serif;
    color: #222;
}

.tiles {
    position: absolute;
    left: 0;
    right: 0;
    bottom: 22px;
    display: grid;
    grid-template-columns: repeat(3, 150px);
    justify-content: center;
    gap: 6px;
}

.tiles button {
    height: 76px;
    padding-bottom: 18px;
    font: 700 12px/18px "Noto Sans", sans-serif;
    color: #d6f6d6;
}

.tiles small {
    display: block;
    font-size: 12px;
    color: #2ba535;
}

.tiles .t1 { background: #046604; }
.tiles .t2 { background: #068206; }
.tiles .t3 { background: #048f02; }
.tiles .t4 { background: #046204; }
.tiles .t5 { background: #04930c; }
.tiles .t6 { background: #07700a; }
.tiles .t7 { background: #058a18; }
.tiles .t8 { background: #0b6c12; }

.tiles .t1 small { color: #1f9a2c; }
.tiles .t2 small { color: #3cba2a; }
.tiles .t3 small { color: #24c424; }
.tiles .t5 small { color: #22c43c; }
.tiles .t6 small,
.tiles .t8 small { color: #3b9c42; }
```
